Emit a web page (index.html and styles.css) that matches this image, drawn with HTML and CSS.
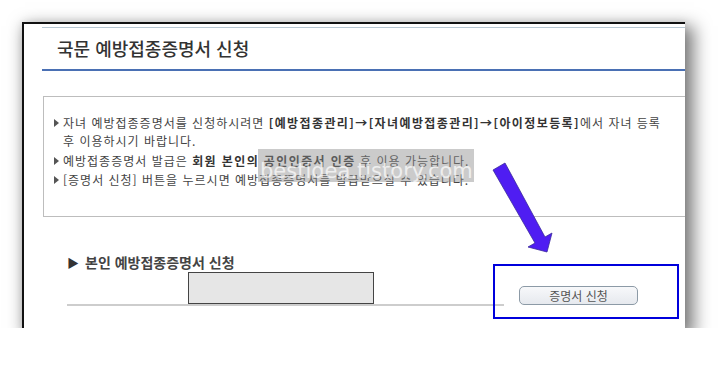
FILE: index.html
```html
<!DOCTYPE html>
<html lang="ko">
<head>
  <meta charset="UTF-8">
  <title>국문 예방접종증명서 신청</title>
  <link rel="stylesheet" href="styles.css">
</head>
<body>
  <div class="frame">
    <div class="page-head">
      <h1>국문 예방접종증명서 신청</h1>
    </div>

    <div class="info-box">
      <ul class="info-list">
        <li>자녀 예방접종증명서를 신청하시려면 <b>[예방접종관리]→[자녀예방접종관리]→[아이정보등록]</b>에서 자녀 등록 후 이용하시기 바랍니다.</li>
        <li>예방접종증명서 발급은 <b>회원 본인의 공인인증서 인증</b> 후 이용 가능합니다.</li>
        <li>[증명서 신청] 버튼을 누르시면 예방접종증명서를 발급받으실 수 있습니다.</li>
      </ul>
    </div>

    <div class="section">
      <h2 class="section-title"><span class="tri">▶</span>본인 예방접종증명서 신청</h2>
      <div class="section-row">
        <div class="masked"></div>
      </div>
    </div>

    <div class="watermark">bestidea.tistory.com</div>

    <svg class="arrow" width="80" height="100" viewBox="0 0 80 100">
      <!-- coords are page coords minus (485,158) -->
      <polygon points="8,12 20,5 60,79 67,75 62,94 43,89 50,85" />
    </svg>

    <div class="callout">
      <button class="btn">증명서 신청</button>
    </div>
  </div>
</body>
</html>
```

FILE: styles.css
```css
body {
  margin: 0;
  background: #fff;
  font-family: "Noto Sans CJK KR", "Noto Sans", sans-serif;
  color: #444;
}

.frame {
  position: relative;
  box-sizing: border-box;
  width: 663px;
  height: 306px;
  margin: 22px 0 0 22px;
  border-top: 2px solid #111;
  border-left: 2px solid #111;
  background: #fff;
  overflow: hidden;
  box-shadow: 6px 7px 16px 3px rgba(0, 0, 0, 0.5), 0 0 8px rgba(0, 0, 0, 0.08);
}

.page-head {
  margin: 3px 0 0 18px;
  border-top: 1px solid #b7c7d3;
  border-bottom: 2px solid #4a70b4;
}

.page-head h1 {
  margin: 0;
  padding-left: 15px;
  height: 41px;
  line-height: 41px;
  font-size: 18px;
  font-weight: 500;
  color: #333;
}

.info-box {
  box-sizing: border-box;
  width: 700px;
  height: 121px;
  margin: 25px 0 0 19px;
  border: 1px solid #bdbdbd;
  padding: 17px 0 0 10px;
}

.info-list {
  list-style: none;
  margin: 0;
  padding: 0;
  width: 615px;
  font-size: 12px;
  line-height: 18px;
  letter-spacing: 1px;
}

.info-list li {
  position: relative;
  padding-left: 9px;
  margin-bottom: 1px;
}

.info-list li:first-child {
  margin-bottom: 2px;
}

.info-list li::before {
  content: "";
  position: absolute;
  left: 0;
  top: 5px;
  border-left: 5px solid #555;
  border-top: 4px solid transparent;
  border-bottom: 4px solid transparent;
}

.info-list b {
  color: #333;
  letter-spacing: 1.4px;
}

.section {
  margin: 35px 0 0 43px;
  width: 437px;
}

.section-title {
  margin: 0;
  height: 20px;
  line-height: 20px;
  font-size: 14px;
  font-weight: 700;
  color: #444;
}

.tri {
  display: inline-block;
  width: 18px;
  font-size: 12px;
  color: #333;
}

.section-row {
  height: 32px;
  border-bottom: 2px solid #cdcdcd;
}

.masked {
  box-sizing: border-box;
  width: 186px;
  height: 32px;
  margin-left: 121px;
  background: #e6e6e6;
  border: 1px solid #444;
}

.watermark {
  position: absolute;
  left: 234px;
  top: 125px;
  width: 216px;
  height: 33px;
  box-sizing: border-box;
  padding-left: 2px;
  background: rgba(140, 140, 140, 0.45);
  color: rgba(255, 255, 255, 0.7);
  font-family: "DejaVu Sans", sans-serif;
  font-size: 21px;
  line-height: 44px;
  overflow: hidden;
}

.arrow {
  position: absolute;
  left: 461px;
  top: 134px;
}

.arrow polygon {
  fill: #4f1df2;
  stroke: #3a2a9c;
  stroke-width: 0.8;
}

.callout {
  position: absolute;
  left: 469px;
  top: 240px;
  box-sizing: border-box;
  width: 186px;
  height: 55px;
  border: 2px solid #0000dc;
  padding: 20px 0 0 24px;
}

.btn {
  display: block;
  box-sizing: border-box;
  width: 119px;
  height: 19px;
  padding: 0;
  border: 1px solid #8c9aa6;
  border-radius: 5px;
  background: linear-gradient(#f7f8fa, #e6e9ee);
  font-family: "Noto Sans CJK KR", sans-serif;
  font-size: 12px;
  line-height: 17px;
  color: #555;
}
```
